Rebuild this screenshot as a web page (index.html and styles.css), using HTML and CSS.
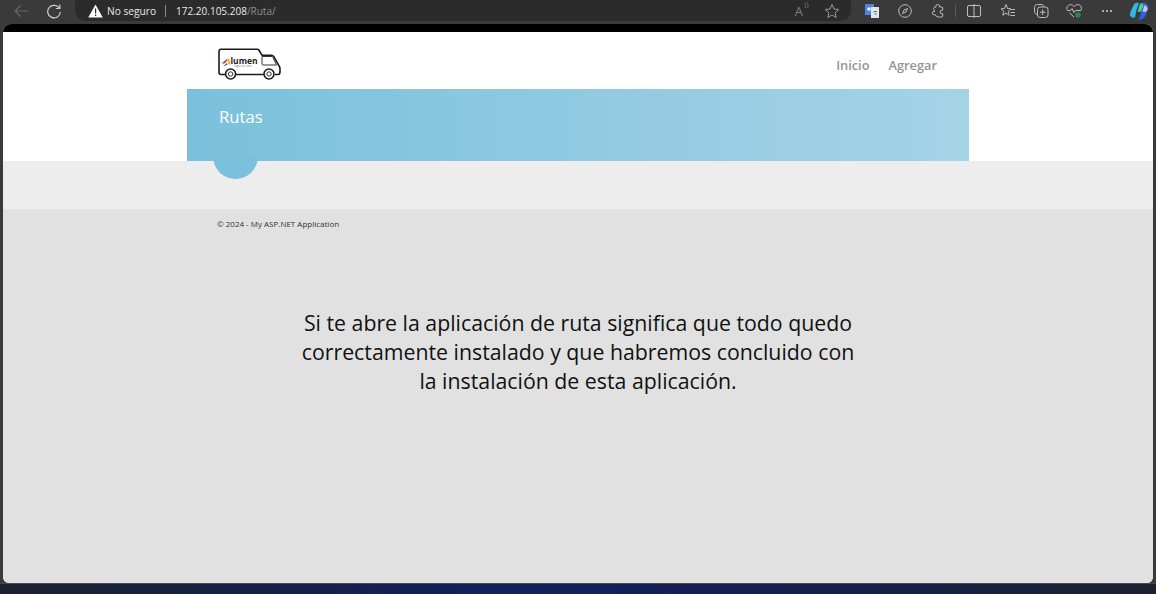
FILE: index.html
```html
<!DOCTYPE html>
<html lang="es">
<head>
    <meta charset="UTF-8">
    <meta name="viewport" content="width=device-width, initial-scale=1.0">
    <title>Rutas</title>
    <link rel="stylesheet" href="styles.css">
</head>
<body>
    <div class="browser">
        <div class="toolbar">
            <svg class="nav-icon back" width="16" height="16" viewBox="0 0 16 16"><path d="M15 8H2M7.500 2.500 2 8l5.500 5.500"/></svg>
            <svg class="nav-icon reload" width="16" height="16" viewBox="0 0 16 16"><path d="M13.500 5.500A6.300 6.300 0 1 0 14.300 9M13.800 1.500v4h-4"/></svg>

            <div class="address">
                <svg class="warn" width="15" height="14" viewBox="0 0 15 14"><path d="M7.500.5 14.800 13.500H.2z" fill="#fff"/><path d="M7 4.500h1.200v5H7zM7 10.500h1.200v1.500H7z" fill="#2b2b2b"/></svg>
                <span class="warn-text">No seguro</span>
                <span class="divider"></span>
                <span class="url">172.20.105.208<span class="url-path">/Ruta/</span></span>
                <div class="address-icons">
                    <span class="read">A<svg width="6" height="8" viewBox="0 0 6 8"><path d="M1 1c2 1 2 3 1 5M3.500 0c2 2 2 4 1 6"/></svg></span>
                    <svg class="tool star" width="16" height="16" viewBox="0 0 16 16"><path d="M8 1.500 10 6l4.700.5-3.500 3.200 1 4.800L8 12l-4.200 2.500 1-4.800L1.300 6.500 6 6z"/></svg>
                </div>
            </div>

            <div class="tools">
                <span class="tool-slot">
                    <svg width="14" height="14" viewBox="0 0 14 14"><rect x="0" y="0" width="9" height="11" fill="#4a86e0"/><rect x="6" y="3" width="8" height="11" fill="#dfe6ee"/><circle cx="4" cy="5" r="1.800" fill="#e8f0fc"/><rect x="8.500" y="7" width="3.500" height="1.200" fill="#6b7480"/><rect x="9.500" y="9.500" width="2" height="1.200" fill="#6b7480"/></svg>
                </span>
                <span class="tool-slot">
                    <svg class="tool" width="16" height="16" viewBox="0 0 16 16"><circle cx="8" cy="8" r="6.300"/><path d="M5.500 10.500 7 7l3.500-1.500L9 9z"/></svg>
                </span>
                <span class="tool-slot">
                    <svg class="tool" width="16" height="16" viewBox="0 0 16 16"><path d="M6 2.800a1.800 1.800 0 0 1 3.500 0V4h2.200c.6 0 1 .4 1 1v2.200h-.8a1.800 1.800 0 0 0 0 3.600h.8V13c0 .6-.4 1-1 1H9.500c-2 0-4-.5-4-2.200H4.300a1.800 1.800 0 0 1 0-3.600h.7C4 7 3 6 4 4.500c.5-.5 1-.5 2-.5z"/></svg>
                </span>
                <span class="tool-sep"></span>
                <span class="tool-slot">
                    <svg class="tool" width="16" height="16" viewBox="0 0 16 16"><rect x="1.500" y="2.500" width="13" height="11" rx="1.500"/><path d="M8 1v14"/></svg>
                </span>
                <span class="tool-slot">
                    <svg class="tool" width="16" height="16" viewBox="0 0 16 16"><path d="M6 1.500 7.500 5.500l3.500.3L8.300 8.300l.9 4-3.200-2.200-3.200 2.200.9-4L1 5.800l3.500-.3zM11 6.500h4M10.500 9.500h4.500M10.500 12.500h4.500"/></svg>
                </span>
                <span class="tool-slot">
                    <svg class="tool" width="16" height="16" viewBox="0 0 16 16"><path d="M4 11.500C2.500 11 1.500 10 1.500 8V4.500c0-1.700 1-2.800 2.800-3H8c1.500 0 2.500.7 3 2"/><rect x="4.500" y="4" width="10.500" height="10.500" rx="2.500"/><path d="M9.700 6.500v5.500M7 9.200h5.500"/></svg>
                </span>
                <span class="tool-slot">
                    <svg class="tool" width="18" height="16" viewBox="0 0 18 16"><path d="M9 3.500C7.500 1.500 4.500 1 2.800 2.800 1.500 4.200 1.500 6 2.500 7.500h3l1.500-2 2 4 1.500-2h5.500c.7-1.500.7-3.200-.5-4.700C13.500 1 10.500 1.500 9 3.500zM4.500 10 9 14"/><circle class="health-dot" cx="13" cy="12" r="2.800"/></svg>
                </span>
                <span class="tool-slot">
                    <svg width="12" height="4" viewBox="0 0 12 4"><circle cx="2" cy="2" r="1" fill="#d0d0d0"/><circle cx="6" cy="2" r="1" fill="#d0d0d0"/><circle cx="10" cy="2" r="1" fill="#d0d0d0"/></svg>
                </span>
                <span class="tool-slot copilot">
                    <svg width="20" height="18" viewBox="0 0 20 18"><path d="M5 2.500C6 .8 8 .5 10 1L7.500 8 6 15.500c-2.500.5-4.500-.5-5-2-.5-2 .5-3.500 1.500-6z" fill="#34b5e0"/><path d="M13 1c3-.5 5 .5 6 2.500.7 2 0 4-1 6.500l-2 4.500c-1 2-3 3-5.500 3H7.500c2 0 3-1.500 3.500-3.500l1.500-6z" fill="#2468e0"/><path d="M13.500 1c-2 0-3 1.500-3.500 3.500L8.500 10 12 9.500 14.500 4z" fill="#41cfa0"/><path d="M15.500 3c2.500 1 3.500 3 3 5l-2 2-3-.5z" fill="#e6b4e8"/></svg>
                </span>
            </div>
        </div>

        <div class="window">
            <div class="topline"></div>

            <header class="site-header">
                <div class="wrap">
                    <nav class="site-nav">
                        <a class="logo" href="#">
                            <svg width="64" height="32" viewBox="0 0 64 32">
                                <path class="van" d="M7.500 26.500H3c-1.500 0-2-.7-2-2V3.500C1 2 1.700 1.300 3 1.300h36c1 0 1.500.3 2 1l3 5h9c1.500 0 2.300.5 3 1.500l5 9c.7 1 1 2 1 3v3c0 1.500-.7 2.700-2 2.700h-3M45.800 26.500H17.800"/>
                                <path class="van-thin" d="M44 8.500h9c1 0 1.500.3 2 1l3.500 7.500H45c-.7 0-1-.4-1-1z"/>
                                <circle class="van" cx="12.600" cy="26" r="5"/>
                                <circle class="van-thin" cx="12.600" cy="26" r="2.200"/>
                                <circle class="van" cx="51" cy="26" r="5"/>
                                <circle class="van-thin" cx="51" cy="26" r="2.200"/>
                                <path d="M3.500 15.500 9 11l.5 1.500-3 3z" fill="#d8352a"/>
                                <path d="M9.500 10.500 11 11l1.500 6-2-1z" fill="#f2a31c"/>
                                <path d="M5 18.500l4-3.500 .5 1.500z" fill="#2a3f9e"/>
                                <text class="logo-text" x="12.500" y="15.500">lumen</text>
                                <text class="logo-sub" x="16" y="19">Sigue la ruta</text>
                            </svg>
                        </a>
                        <div class="nav-links">
                            <a href="#">Inicio</a>
                            <a href="#">Agregar</a>
                        </div>
                    </nav>
                    <div class="banner">
                        <h1>Rutas</h1>
                    </div>
                </div>
            </header>

            <div class="band"></div>

            <footer class="site-footer">
                <div class="wrap">
                    <p class="copyright">© 2024 - My ASP.NET Application</p>
                </div>
                <p class="message">Si te abre la aplicación de ruta significa que todo quedo correctamente instalado y que habremos concluido con la instalación de esta aplicación.</p>
            </footer>
        </div>

        <div class="desktop"></div>
    </div>
</body>
</html>
```

FILE: styles.css
```css
html, body {
    margin: 0;
    height: 100%;
}

body {
    overflow: hidden;
    font-family: "Open Sans", "Noto Sans", sans-serif;
}

.browser {
    display: flex;
    flex-direction: column;
    height: 594px;
    background-color: #3a3a3a;
}

/* browser chrome */
.toolbar {
    display: flex;
    align-items: flex-start;
    height: 24px;
    flex-shrink: 0;
    background-color: #3a3a3a;
}

.nav-icon {
    flex-shrink: 0;
    fill: none;
    stroke-width: 1.2;
    margin-top: 3px;
}

.back {
    margin-left: 13px;
    stroke: #686868;
}

.reload {
    margin-left: 17px;
    stroke: #cfcfcf;
}

.address {
    display: flex;
    flex-shrink: 0;
    align-items: center;
    width: 776px;
    height: 21px;
    margin-left: 13px;
    padding-left: 13px;
    box-sizing: border-box;
    background-color: #2b2b2b;
    border-radius: 0 0 11px 11px;
    color: #eaeaea;
    font-size: 10.2px;
}

.warn {
    flex-shrink: 0;
}

.warn-text {
    margin-left: 4px;
}

.divider {
    width: 1px;
    height: 12px;
    margin: 0 10px 0 9px;
    background-color: #8a8a8a;
}

.url {
    font-size: 10px;
}

.url-path {
    color: #8e8e8e;
}

.address-icons {
    display: flex;
    align-items: center;
    gap: 15px;
    margin-left: auto;
    margin-right: 11px;
}

.read {
    display: flex;
    color: #7c7c7c;
    font-size: 13px;
}

.read svg {
    fill: none;
    stroke: #7c7c7c;
    stroke-width: .7;
}

.tool {
    fill: none;
    stroke: #bdbdbd;
    stroke-width: 1;
}

.star {
    stroke: #9a9a9a;
}

.tools {
    display: flex;
    flex-shrink: 0;
    align-items: center;
    height: 21px;
    margin-left: 4px;
}

.tool-slot {
    display: flex;
    align-items: center;
    justify-content: center;
    width: 33.25px;
    height: 21px;
}

.tool-sep {
    width: 1px;
    height: 12px;
    margin-right: 2px;
    background-color: #5a5a5a;
}

.copilot {
    margin-left: -2px;
}

.health-dot {
    fill: #1f8a4c;
    stroke: none;
}

/* page */
.window {
    display: flex;
    flex-direction: column;
    flex: 1;
    margin: 0 3px;
    background-color: #e0e0e0;
    border-radius: 8px 8px 6px 6px;
    overflow: hidden;
}

.topline {
    height: 8px;
    background-color: #000;
}

.site-header {
    background-color: #fff;
}

.wrap {
    width: 782px;
    margin-left: 184px;
}

.site-nav {
    display: flex;
    align-items: center;
    justify-content: space-between;
    height: 57px;
    padding: 0 32px 0 31px;
}

.logo {
    display: block;
    height: 32px;
    margin-top: 7px;
}

.van {
    fill: none;
    stroke: #1a1a1a;
    stroke-width: 1.6;
}

.van-thin {
    fill: none;
    stroke: #333;
    stroke-width: 1;
}

.logo-text {
    font-size: 8.5px;
    font-weight: 700;
    fill: #222;
}

.logo-sub {
    font-size: 3px;
    fill: #777;
}

.nav-links {
    display: flex;
    gap: 19px;
    margin-top: 9px;
}

.nav-links a {
    color: #949494;
    font-size: 12.8px;
    font-weight: 600;
    text-decoration: none;
}

.banner {
    position: relative;
    height: 72px;
    background: linear-gradient(to right, #7bc0dc, #a5d3e6);
}

.banner::after {
    content: "";
    position: absolute;
    left: 26px;
    top: 45px;
    width: 45px;
    height: 45px;
    border-radius: 50%;
    background-color: #7bc0dc;
    clip-path: inset(22px 0 0 0);
}

.banner h1 {
    margin: 0;
    padding: 16px 0 0 32px;
    color: #fff;
    font-size: 16.7px;
    font-weight: 400;
}

.band {
    height: 48px;
    background-color: #ededed;
}

.site-footer {
    flex: 1;
    background-color: #e1e1e1;
}

.copyright {
    margin: 0;
    padding: 9px 0 0 30px;
    color: #333;
    font-size: 8px;
}

.message {
    width: 560px;
    margin: 79px auto 0;
    color: #111;
    font-size: 21.3px;
    line-height: 29px;
    text-align: center;
}

.desktop {
    height: 10px;
    flex-shrink: 0;
    background: linear-gradient(to right, #1a2230, #12205e 45%, #15204e 70%, #1a2230);
    border-top: 1px solid #4a4a4a;
}
```
